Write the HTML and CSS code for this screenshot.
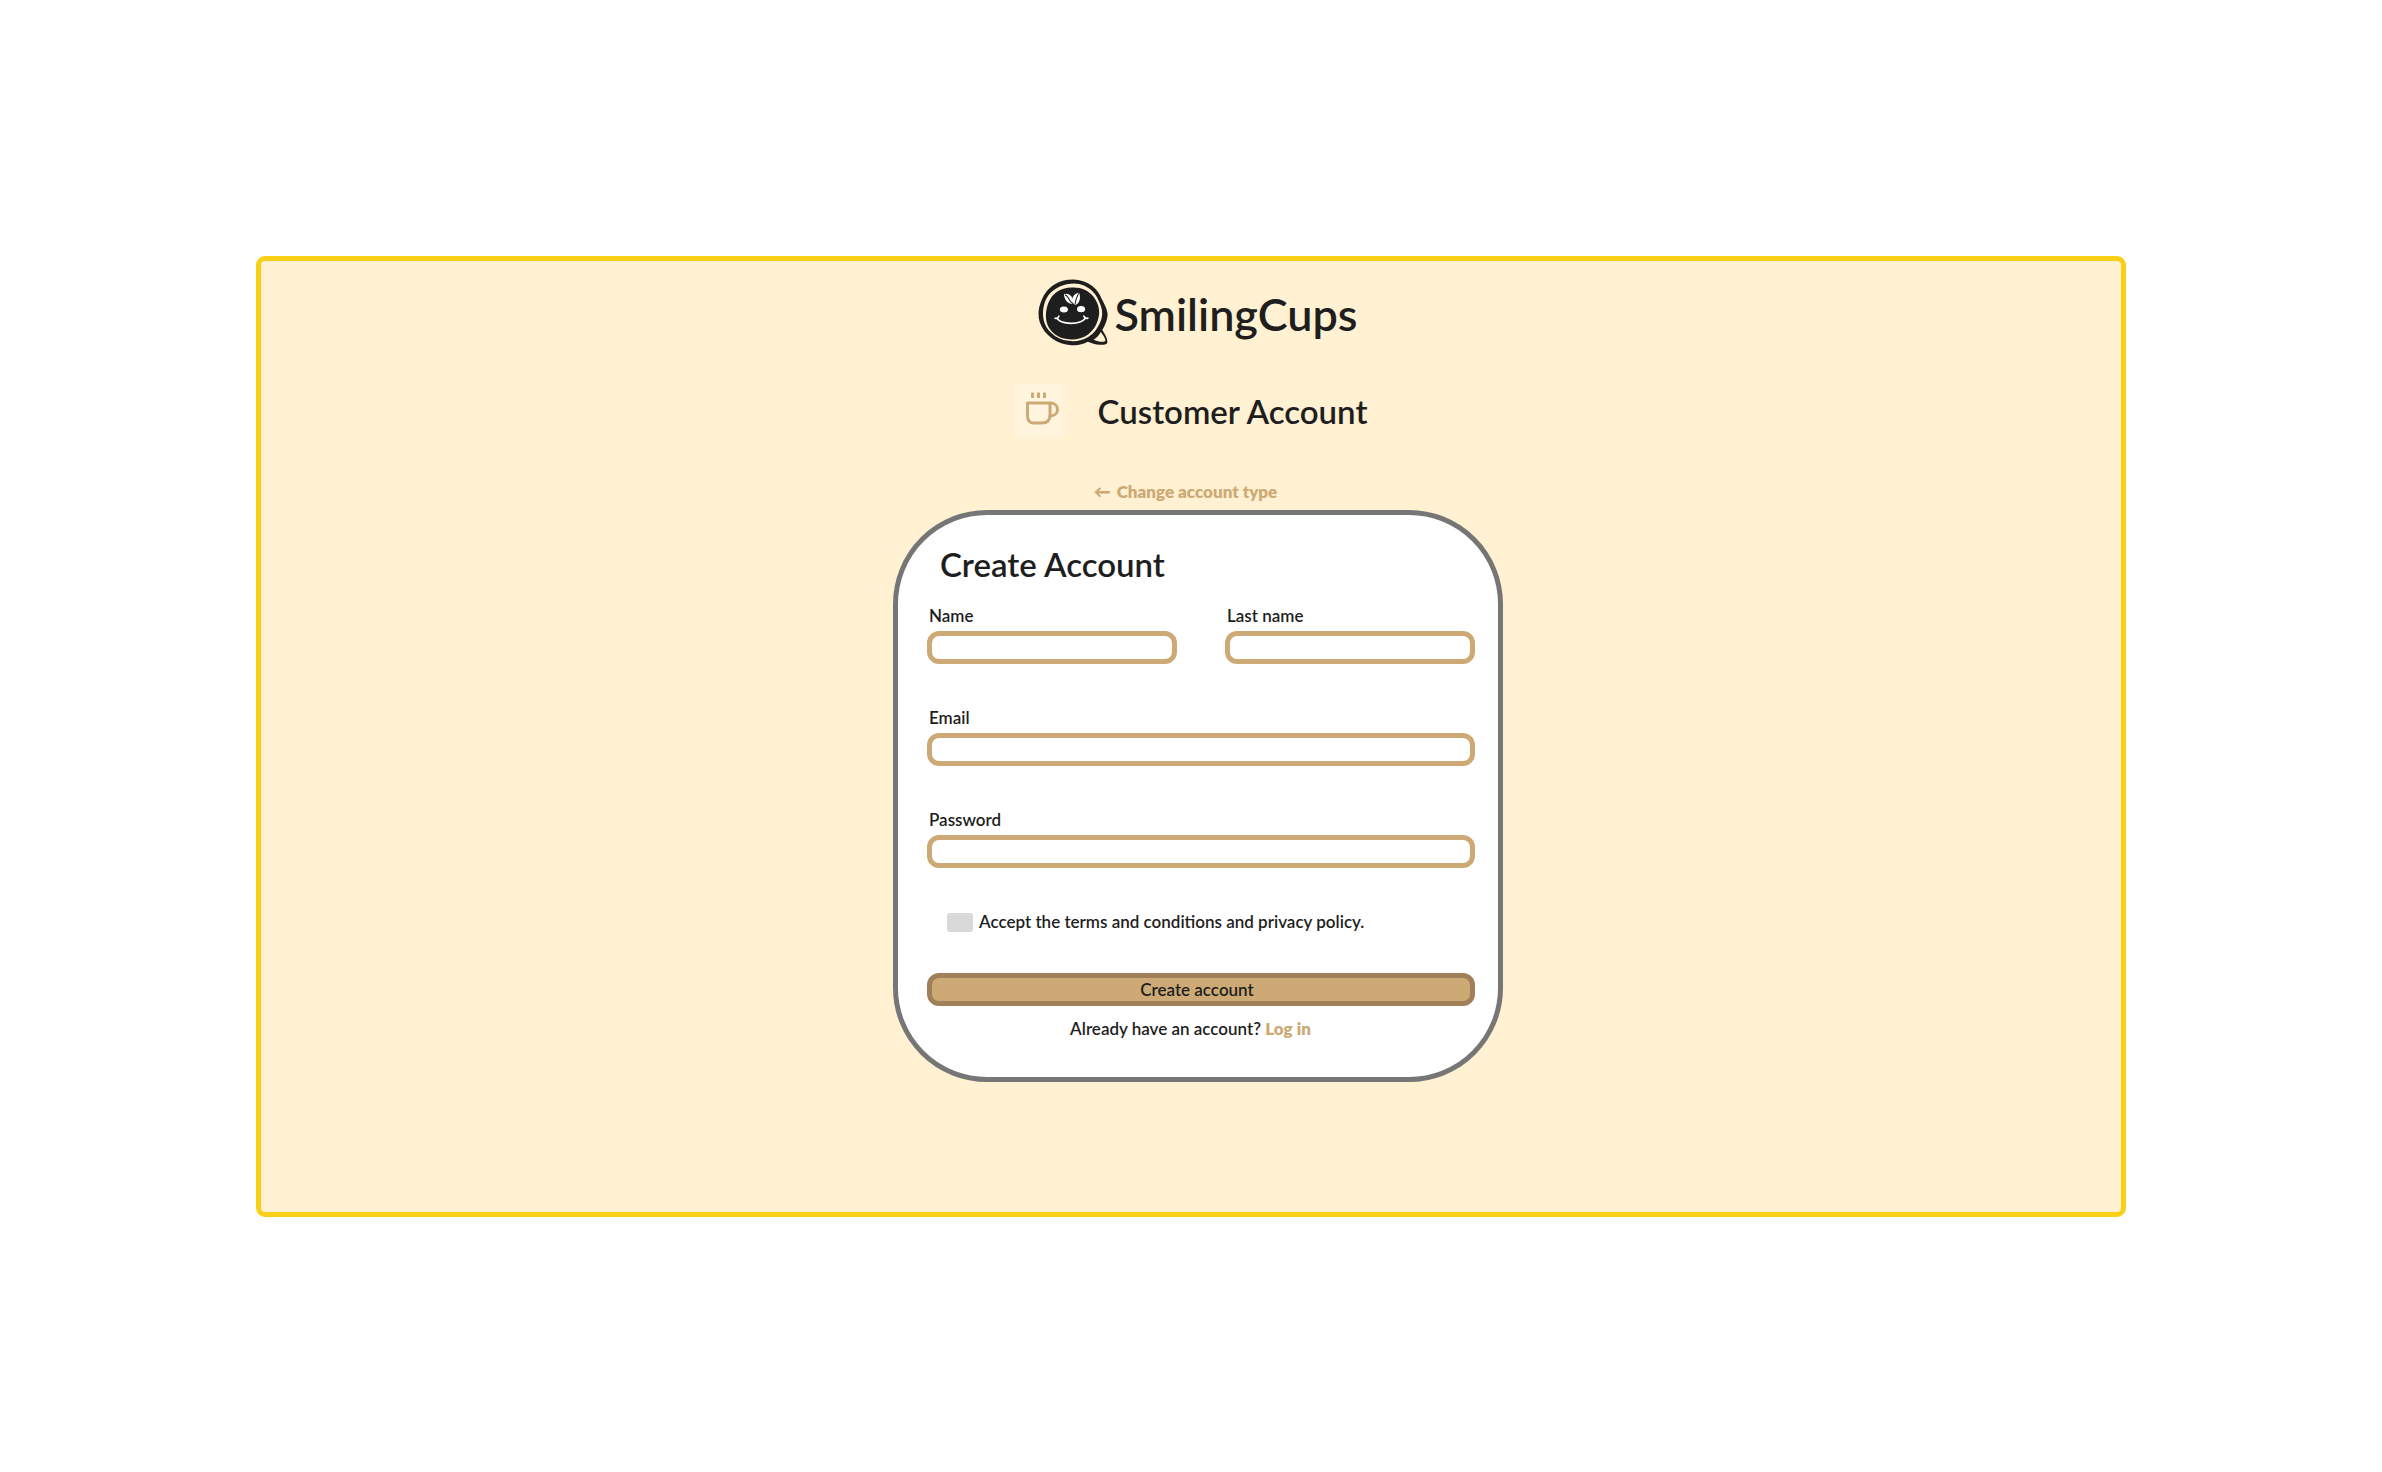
FILE: index.html
```html
<!DOCTYPE html>
<html lang="en">
<head>
<meta charset="utf-8">
<meta name="viewport" content="width=device-width, initial-scale=1">
<title>SmilingCups – Create Account</title>
<link rel="stylesheet" href="styles.css">
</head>
<body>
<main class="screen">
  <div class="brand">
    <svg class="brand-logo" viewBox="33 27 208 198" aria-hidden="true">
      <path fill="#1e1e1e" d="M137 28C158 28 178 35 195 48C207 58 216 69 221 83C229 100 238 113 240 132C239 150 232 165 224 178C231 190 241 204 239 216C236 224 221 222 208 221C197 219 190 216 181 213C166 221 150 225 132 223C111 222 92 215 75 203C57 190 45 174 38 154C32 133 34 111 43 91C51 70 64 53 83 42C100 31 118 28 137 28Z"/>
      <path fill="#fff1d1" d="M140 40C161 40 180 49 194 62C207 74 214 91 220 107C226 124 225 141 217 157C208 176 196 192 178 201C161 210 143 213 124 210C104 208 86 200 72 186C57 172 49 154 48 134C47 113 52 92 64 75C82 52 111 40 140 40Z"/>
      <path fill="#1e1e1e" d="M132 52C158 50 182 59 198 79C211 96 217 115 214 136C210 158 200 178 182 191C164 204 141 208 119 205C98 202 80 192 68 175C56 157 54 134 59 113C64 91 75 73 93 62C105 55 118 53 132 52Z"/>
      <path fill="#fff1d1" d="M219 184C226 192 234 203 233 210C231 216 211 213 198 207C207 202 214 194 219 184Z"/>
      <g fill="#fff">
        <ellipse cx="110" cy="117" rx="12" ry="9"/>
        <ellipse cx="161" cy="116" rx="12" ry="9"/>
        <path d="M134 101C121 99 111 89 110 72C121 65 137 78 138 91Z"/>
        <path d="M139 101C131 87 136 70 155 67C161 81 157 99 144 103Z"/>
      </g>
      <path fill="none" stroke="#1e1e1e" stroke-width="3" d="M113 73C125 76 122 89 135 99M154 69C148 82 147 78 143 101"/>
      <path fill="none" stroke="#fff" stroke-width="5" stroke-linecap="round" d="M84 143Q92 145 95 137M90 144C102 162 158 164 174 143M169 137Q173 145 181 143"/>
    </svg>
    <span class="brand-name">SmilingCups</span>
  </div>

  <header class="account-type">
    <svg class="cup" viewBox="0 0 48 53" aria-hidden="true">
      <rect width="48" height="53" fill="#fff4de"/>
      <g fill="none" stroke="#cdaa75" stroke-width="3">
        <path d="M12.500 19H35V31Q35 39 27 39H19Q12.500 39 12.500 32Z" stroke-linejoin="round"/>
        <path d="M35 19C45 19 45 32 35 32"/>
        <path d="M17.500 8.500V14M23.500 8.500V14M29.500 8.500V14"/>
      </g>
    </svg>
    <h1 class="title">Customer Account</h1>
  </header>

  <a class="link back" href="#account-type"><span class="arrow">←</span>Change account type</a>

  <form class="card">
    <h2 class="title card-title">Create Account</h2>
    <div class="names">
      <div class="field"><label for="name">Name</label><input class="box" id="name" type="text"></div>
      <div class="field"><label for="last">Last name</label><input class="box" id="last" type="text"></div>
    </div>
    <div class="field"><label for="email">Email</label><input class="box" id="email" type="email"></div>
    <div class="field"><label for="password">Password</label><input class="box" id="password" type="password"></div>
    <div class="terms">
      <input class="tick" id="terms" type="checkbox">
      <label for="terms">Accept the terms and conditions and privacy policy.</label>
    </div>
    <button class="box submit" type="submit">Create account</button>
    <p class="login">Already have an account? <a class="link" href="#login">Log in</a></p>
  </form>
</main>
</body>
</html>
```
FILE: styles.css
```css
*, *::before, *::after { box-sizing: border-box; }

body {
  margin: 0;
  padding: 256px;
  background: #fff;
  color: #1e1e1e;
  font: 600 17px/24px Lato, "Open Sans", sans-serif;
}

.screen {
  display: flex;
  flex-direction: column;
  align-items: center;
  min-height: 960px;
  padding: 18px 0 130px 14px;
  background: #fff1d1;
  border: 5px solid #f9d015;
  border-radius: 9px;
}

.brand { display: flex; align-items: center; gap: 6px; }
.brand-logo { width: 70px; height: 67px; }
.brand-name { padding-top: 4px; font-size: 45px; line-height: 63px; }

.account-type {
  display: flex;
  align-items: center;
  gap: 35px;
  margin: 38px 14px 43px 0;
}
.cup { width: 48px; height: 53px; }
.title { margin: 0; font-size: 33px; line-height: 36px; font-weight: 600; }

.link { color: #cdaa75; font-weight: 800; text-decoration: none; }
.back { margin: 0 25px 6px 0; }
.arrow { margin-right: 6px; }

.card {
  display: flex;
  flex-direction: column;
  width: 100%;
  max-width: 610px;
  padding: 31px 23px 36px 29px;
  background: #fff;
  border: 5px solid #767676;
  border-radius: 94px;
}
.card-title { margin: 0 0 22px 13px; }

.names { display: grid; grid-template-columns: 1fr 1fr; gap: 48px; }
.field { display: flex; flex-direction: column; gap: 3px; margin-bottom: 42px; }
.field label { padding-left: 2px; }

.box {
  width: 100%;
  height: 33px;
  padding: 0 10px;
  background: #fff;
  border: 5px solid #cdaa75;
  border-radius: 12px;
  color: inherit;
  font: inherit;
}

.terms { display: flex; align-items: center; gap: 6px; margin: 0 0 39px 20px; }
.tick {
  appearance: none;
  width: 26px;
  height: 19px;
  margin: 0;
  background: #d9d9d9;
  border-radius: 3px;
}
.tick:checked { background: #cdaa75; }

.submit {
  padding: 0 8px 0 0;
  background: #cdaa75;
  border-color: #a08058;
  line-height: 23px;
}
.login { margin: 11px 0 0; padding-right: 21px; text-align: center; }
```
